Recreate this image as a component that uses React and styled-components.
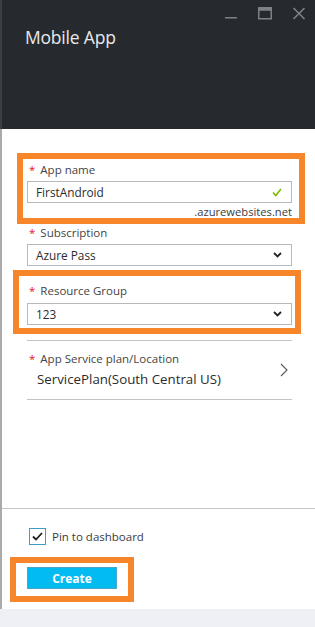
import styled, { createGlobalStyle } from "styled-components";

const GlobalStyle = createGlobalStyle`
    body {
        margin: 0;
        background: #eff0f6;
        font-family: "Open Sans", "Liberation Sans", sans-serif;
    }
`;

const Page = styled.div`
    width: 315px;
    height: 627px;
    display: flex;
    flex-direction: column;
    background: #eff0f6;
`;

const Blade = styled.div`
    height: 609px;
    display: flex;
    flex-direction: column;
    background: #fff;
`;

const Header = styled.header`
    height: 129px;
    box-sizing: border-box;
    background: #262a2f;
    border-left: 2px solid #3c4046;
    display: flex;
    flex-direction: column;
`;

const Controls = styled.div`
    display: flex;
    justify-content: flex-end;
    align-items: flex-start;
    gap: 20px;
    padding: 7px 9px 0 0;
    height: 19px;
`;

const ControlIcon = styled.svg`
    width: 14px;
    height: 13px;
    color: #7e8287;
`;

const Title = styled.h1`
    margin: 0;
    padding-left: 23px;
    font-family: "Open Sans", sans-serif;
    font-weight: 400;
    font-size: 17.5px;
    line-height: 22px;
    color: #e8e9ea;
    letter-spacing: -0.2px;
`;

const Body = styled.div`
    flex: 1;
    display: flex;
    flex-direction: column;
    border-left: 2px solid #aaaaaa;
`;

const Form = styled.div`
    flex: 1;
    padding: 24px 23px 0 25px;
    display: flex;
    flex-direction: column;
`;

const Highlight = styled.div`
    border: 6px solid #f7862a;
    margin: ${(p) => p.$mt || 0}px ${(p) => p.$mr}px 0 ${(p) => p.$ml}px;
    padding: ${(p) => p.$pt}px ${(p) => p.$pr}px ${(p) => p.$pb}px ${(p) => p.$pl}px;
    align-self: ${(p) => (p.$fit ? "flex-start" : "stretch")};
`;

const Label = styled.div`
    font-size: 11.5px;
    line-height: 16px;
    color: #444;
    margin-top: ${(p) => p.$mt || 0}px;
`;

const Star = styled.span`
    color: #e81123;
    margin: 0 5px 0 2px;
`;

const Box = styled.div`
    margin-top: ${(p) => p.$mt || 3}px;
    height: 22px;
    box-sizing: border-box;
    border: 1px solid #b9b9b9;
    display: flex;
    align-items: center;
    justify-content: space-between;
    padding: 0 9px 0 8px;
    font-size: 11.8px;
    color: #2b2b2b;
`;

const Suffix = styled.div`
    margin-top: 3px;
    text-align: right;
    font-size: 11.2px;
    line-height: 12px;
    color: #3c3c3c;
`;

const NavRow = styled.div`
    margin-top: 6px;
    border-top: 1px solid #c4c4c4;
    border-bottom: 1px solid #c4c4c4;
    padding: 10px 4px 11px 0;
    display: flex;
    align-items: center;
    justify-content: space-between;
`;

const NavValue = styled.div`
    margin-top: 3px;
    padding-left: 10px;
    font-size: 13.3px;
    line-height: 18px;
    color: #2b2b2b;
`;

const Footer = styled.div`
    border-top: 1px solid #c6c6c6;
    padding: 19px 0 7px 25px;
    display: flex;
    flex-direction: column;
`;

const PinRow = styled.label`
    display: flex;
    align-items: center;
    gap: 6px;
    margin-left: 2px;
    font-size: 11.5px;
    line-height: 17px;
    color: #3c3c3c;
`;

const CheckBox = styled.span`
    width: 17px;
    height: 17px;
    box-sizing: border-box;
    border: 1px solid #3a9fc5;
    display: flex;
    align-items: center;
    justify-content: center;
`;

const CreateButton = styled.button`
    width: 90px;
    height: 22px;
    border: 1px solid #4aa6c8;
    background: #01bbf1;
    color: #fff;
    font-family: "Open Sans", sans-serif;
    font-weight: 700;
    font-size: 12px;
    padding: 0;
    display: block;
`;

const Chevron = () => (
    <svg width="9" height="6" viewBox="0 0 9 6">
        <path d="M1 1l3.5 3.5L8 1" fill="none" stroke="#222" strokeWidth="1.8" />
    </svg>
);

const App = () => (
    <Page>
        <GlobalStyle />
        <Blade>
            <Header>
                <Controls>
                    <ControlIcon viewBox="0 0 14 13">
                        <rect x="1" y="10" width="12" height="1.5" fill="currentColor" />
                    </ControlIcon>
                    <ControlIcon viewBox="0 0 14 13">
                        <rect x="0.75" y="0.75" width="12.5" height="11" fill="none" stroke="currentColor" strokeWidth="1.5" />
                        <rect x="0.75" y="0.75" width="12.5" height="3" fill="currentColor" />
                    </ControlIcon>
                    <ControlIcon viewBox="0 0 14 13">
                        <path d="M1.5 1l11 11M12.5 1l-11 11" stroke="currentColor" strokeWidth="1.6" />
                    </ControlIcon>
                </Controls>
                <Title>Mobile App</Title>
            </Header>
            <Body>
                <Form>
                    <Highlight $ml={-10} $mr={-13} $pt={3} $pr={7} $pb={0} $pl={4}>
                        <Label>
                            <Star>*</Star>App name
                        </Label>
                        <Box>
                            FirstAndroid
                            <svg width="10" height="9" viewBox="0 0 10 9">
                                <path d="M1 4.5l2.8 3L9 1" fill="none" stroke="#7fba00" strokeWidth="1.7" />
                            </svg>
                        </Box>
                        <Suffix>.azurewebsites.net</Suffix>
                    </Highlight>
                    <Label $mt={1}>
                        <Star>*</Star>Subscription
                    </Label>
                    <Box>
                        Azure Pass
                        <Chevron />
                    </Box>
                    <Highlight $mt={4} $ml={-14} $mr={-9} $pt={7} $pr={3} $pb={3} $pl={8}>
                        <Label>
                            <Star>*</Star>Resource Group
                        </Label>
                        <Box $mt={4}>
                            123
                            <Chevron />
                        </Box>
                    </Highlight>
                    <NavRow>
                        <div>
                            <Label>
                                <Star>*</Star>App Service plan/Location
                            </Label>
                            <NavValue>ServicePlan(South Central US)</NavValue>
                        </div>
                        <svg width="8" height="14" viewBox="0 0 8 14">
                            <path d="M1 1l6 6-6 6" fill="none" stroke="#555" strokeWidth="1.1" />
                        </svg>
                    </NavRow>
                </Form>
                <Footer>
                    <PinRow>
                        <CheckBox>
                            <svg width="11" height="9" viewBox="0 0 11 9">
                                <path d="M1 4.5l3 3L10 1" fill="none" stroke="#1e1e1e" strokeWidth="1.8" />
                            </svg>
                        </CheckBox>
                        Pin to dashboard
                    </PinRow>
                    <Highlight $fit $mt={12} $ml={-17} $mr={0} $pt={4} $pr={11} $pb={7} $pl={11}>
                        <CreateButton>Create</CreateButton>
                    </Highlight>
                </Footer>
            </Body>
        </Blade>
    </Page>
);

export default App;
